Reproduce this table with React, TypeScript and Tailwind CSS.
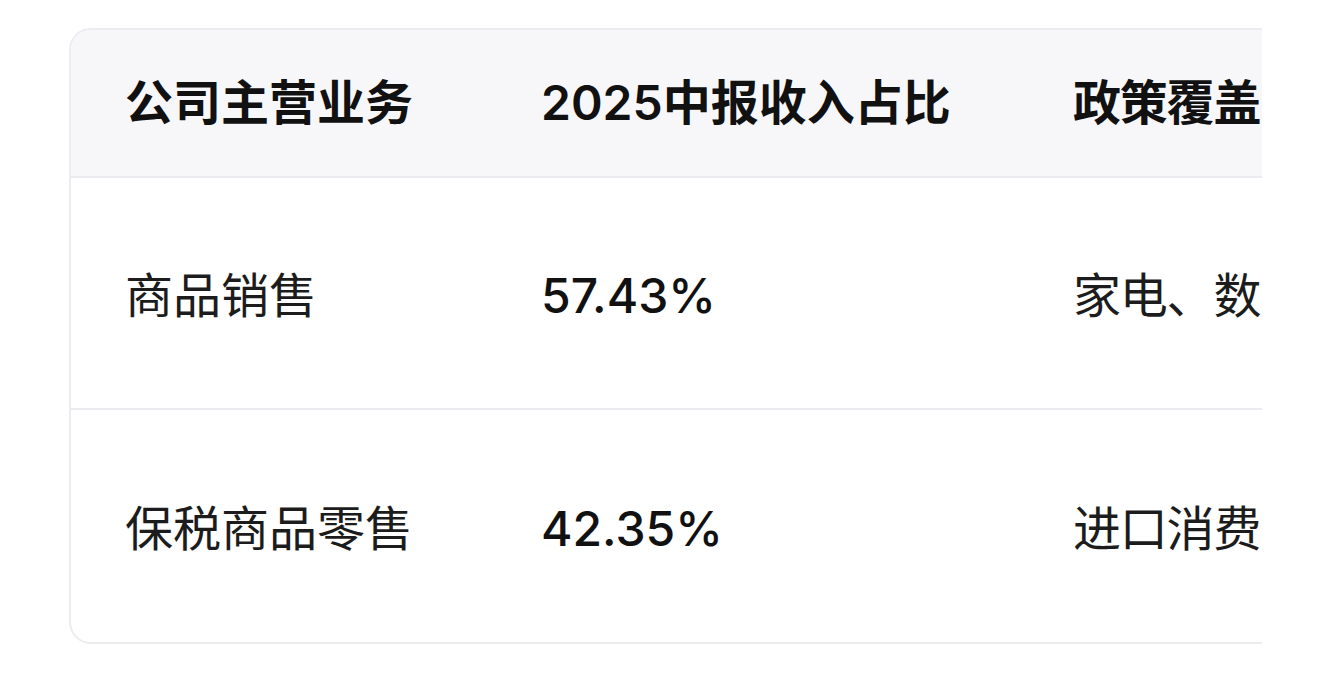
import React from "react";

const rows = [
  { a: "商品销售", b: "57.43%", c: "家电、数" },
  { a: "保税商品零售", b: "42.35%", c: "进口消费" },
];

export default function App() {
  const font = { fontFamily: '"Inter", "Noto Sans CJK SC", sans-serif' };
  return (
    <div className="w-full h-[683px] bg-white pt-[28px] pl-[69px]" style={font}>
      <div className="w-[1193px] overflow-hidden">
        <div className="w-[1400px] rounded-[22px] border-2 border-[#ececf0] overflow-hidden">
          <div className="flex h-[148px] items-center bg-[#f7f7f9] border-b-2 border-[#ececf0] text-[48px] font-semibold text-[#111] whitespace-nowrap">
            <div className="w-[416px] shrink-0 pl-[54px]">公司主营业务</div>
            <div className="w-[534px] shrink-0 pl-[54px]">2025中报收入占比</div>
            <div className="pl-[52px] tracking-[-1.2px]">政策覆盖</div>
          </div>
          {rows.map((r, i) => (
            <div
              key={i}
              className={`flex h-[232px] items-center pt-[6px] text-[48px] text-[#1c1c1c] whitespace-nowrap ${
                i === 0 ? "border-b-2 border-[#ececf0]" : ""
              }`}
            >
              <div className="w-[416px] shrink-0 pl-[54px]">{r.a}</div>
              <div className="w-[534px] shrink-0 pl-[54px] font-medium text-[#111]">{r.b}</div>
              <div className="pl-[52px] tracking-[-1.2px]">{r.c}</div>
            </div>
          ))}
        </div>
      </div>
    </div>
  );
}
